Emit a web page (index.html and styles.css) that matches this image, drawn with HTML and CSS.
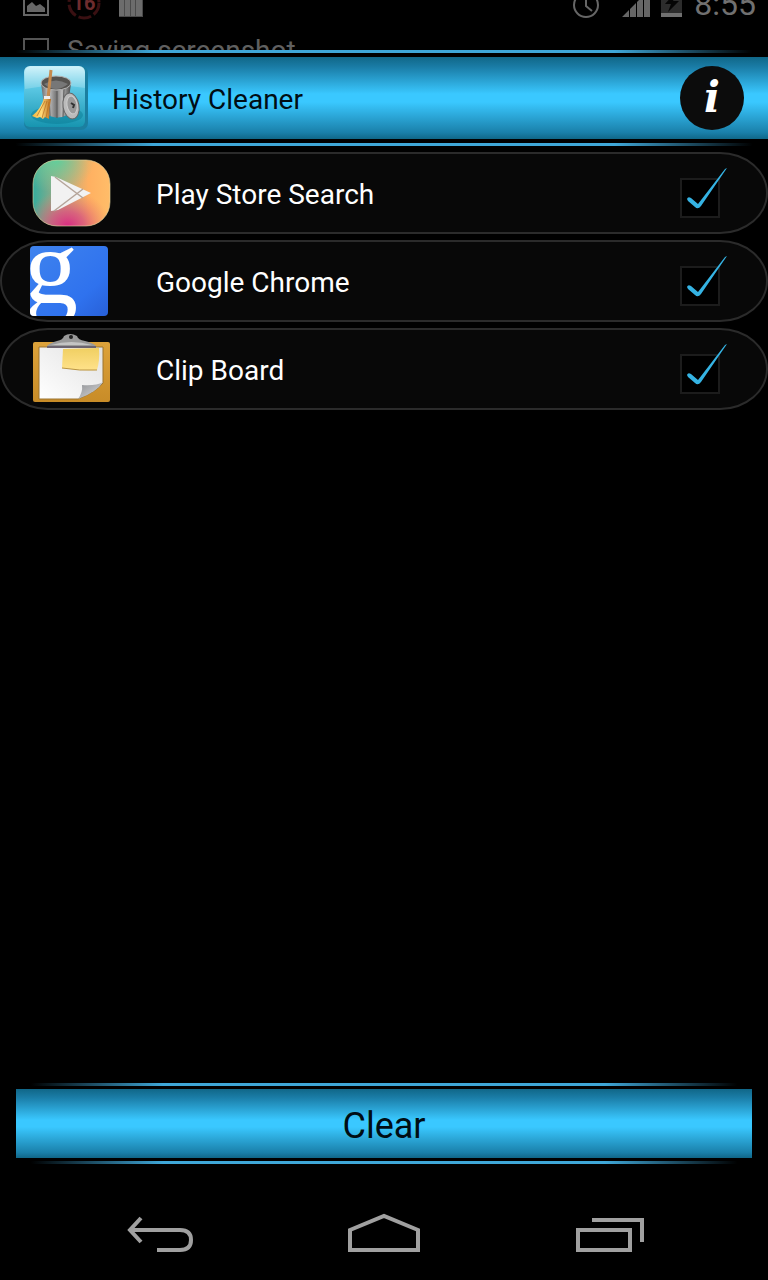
FILE: index.html
```
<!DOCTYPE html>
<html lang="en">
  <head>
    <meta charset="UTF-8" />
    <meta name="viewport" content="width=device-width, initial-scale=1.0" />
    <title>History Cleaner</title>
    <link rel="stylesheet" href="styles.css">
  </head>
  <body>
    <div class="status">
      <div class="status-row status-scrolled">
        <svg width="26" height="26" viewBox="0 0 26 26">
          <rect x="1" y="1" width="24" height="23" fill="none" stroke="#666" stroke-width="2" />
          <path d="M4 21v-6l5-4 4 4 4-2 5 4v4z" fill="#666" />
        </svg>
        <svg width="34" height="34" viewBox="0 0 34 34">
          <circle cx="17" cy="16" r="15" fill="none" stroke="#3a1012" stroke-width="3" stroke-dasharray="13 3" />
          <text class="badge-text" x="17" y="23" text-anchor="middle">16</text>
        </svg>
        <svg width="24" height="26" viewBox="0 0 24 26">
          <path d="M0 0h24v26H0z" fill="#4a4a4a" />
          <path d="M0 0h5v25H0zM6 0h5v25H6zM12 0h4v25h-4zM17 0h6v25h-6z" fill="#6c6c6c" />
        </svg>
        <div class="status-right">
          <svg class="alarm" width="28" height="28" viewBox="0 0 28 28">
            <circle cx="14" cy="15" r="12" fill="none" stroke="#666" stroke-width="2" />
            <path d="M14 7v9l6 5" fill="none" stroke="#666" stroke-width="2" />
          </svg>
          <svg width="28" height="28" viewBox="0 0 28 28">
            <path d="M0 27L7 20v7zM8 19l6-6v14H8zM15 12l6-6v21h-6zM22 5l6-5v27h-6z" fill="#666" />
          </svg>
          <svg width="22" height="28" viewBox="0 0 22 28">
            <path d="M0 0h21v27H0z" fill="#2c2c2c" />
            <path d="M0 23h21v4H0z" fill="#707070" />
            <path d="M13 4L4 14h6l-3 8 11-11h-6l4-7z" fill="#050505" />
          </svg>
          <span class="clock">8:55</span>
        </div>
      </div>
      <div class="status-row">
        <svg width="26" height="26" viewBox="0 0 26 26">
          <rect x="1" y="2" width="24" height="23" fill="none" stroke="#555" stroke-width="2" />
        </svg>
        <span>Saving screenshot</span>
      </div>
    </div>

    <header class="glow">
      <div class="glow-fill title-bar">
        <svg width="64" height="64" viewBox="0 0 64 64">
          <defs>
            <linearGradient id="tile" x1="0" y1="0" x2="0" y2="1">
              <stop offset="0" stop-color="#c8f1fa" />
              <stop offset=".35" stop-color="#5cc8e4" />
              <stop offset="1" stop-color="#1795b0" />
            </linearGradient>
            <linearGradient id="can">
              <stop offset="0" stop-color="#666" />
              <stop offset=".25" stop-color="#c4c4c4" />
              <stop offset=".5" stop-color="#777" />
              <stop offset=".7" stop-color="#bbb" />
              <stop offset="1" stop-color="#4a4a4a" />
            </linearGradient>
            <linearGradient id="straw">
              <stop offset="0" stop-color="#f2b63c" />
              <stop offset=".5" stop-color="#ffd978" />
              <stop offset="1" stop-color="#b96a1b" />
            </linearGradient>
          </defs>
          <rect width="64" height="64" rx="7" fill="#1b7fa0" />
          <rect width="61" height="61" rx="6" fill="url(#tile)" />
          <path d="M1 23Q32 17 61 22V7q0-6-6-6H7Q1 1 1 7z" fill="#fff" opacity=".2" />
          <ellipse cx="33" cy="49" rx="26" ry="9" fill="#087b92" opacity=".45" />
          <path d="M17 17l4 30q11 8 22 2l4-32z" fill="url(#can)" />
          <path d="M25 24l1 26M33 25v27M40 23l-1 28" stroke="#555" stroke-width="1" />
          <ellipse cx="32" cy="17" rx="15" ry="7" fill="#555350" stroke="#b5b5b5" stroke-width="1" />
          <path d="M20 18q12-7 24 0-6 5-12 5t-12-5z" fill="#777" />
          <ellipse cx="47" cy="40" rx="8" ry="13" fill="#bbb" stroke="#666" stroke-width="1" transform="rotate(-10 47 40)" />
          <ellipse cx="48" cy="39" rx="5" ry="9" fill="#999" stroke="#ccc" stroke-width="1" transform="rotate(-10 48 39)" />
          <path d="M47 37l3 2-1 3" fill="none" stroke="#333" stroke-width="2" />
          <path d="M27 4l-3 28" stroke="#c58a4e" stroke-width="3" />
          <path d="M20 32l7 1q-2 9-2 20l-4-2-2 2-3-2-3 1-5-2q9-7 12-18z" fill="url(#straw)" />
          <path d="M21 35l-8 15M23 35l-5 17M25 36l-3 16" stroke="#b86d1e" stroke-width="1" opacity=".7" />
          <path d="M20 30h6v3h-6z" fill="#eee" />
        </svg>
        <h1>History Cleaner</h1>
        <button class="info" type="button" aria-label="About">i</button>
      </div>
    </header>

    <main>
      <label class="item">
        <svg width="84" height="78" viewBox="0 0 84 78">
          <defs>
            <linearGradient id="play">
              <stop offset="0" stop-color="#35ad9d" />
              <stop offset=".4" stop-color="#b5ab80" />
              <stop offset=".72" stop-color="#ffb061" />
              <stop offset="1" stop-color="#ffbd69" />
            </linearGradient>
            <radialGradient id="pink" cx=".45" cy="1" r=".55">
              <stop offset="0" stop-color="#d82b83" />
              <stop offset=".4" stop-color="#d9527f" stop-opacity=".8" />
              <stop offset="1" stop-color="#ea8067" stop-opacity="0" />
            </radialGradient>
            <radialGradient id="green" cx=".3" cy="0" r=".5">
              <stop offset="0" stop-color="#60cf9b" />
              <stop offset="1" stop-color="#8bc692" stop-opacity="0" />
            </radialGradient>
          </defs>
          <rect x="5" y="6" width="77" height="66" rx="24" fill="url(#play)" />
          <rect x="5" y="6" width="77" height="66" rx="24" fill="url(#green)" />
          <rect x="5" y="6" width="77" height="66" rx="24" fill="url(#pink)" stroke="#e6d7a0" stroke-opacity=".6" />
          <path d="M23 22l5 1 35 16-33 17-7 1z" fill="#f2f2f2" />
          <path d="M27 23l28 21M26 57l29-22" stroke="#b5a59a" stroke-width="1.5" />
        </svg>
        <span class="item-name">Play Store Search</span>
        <span class="check">
          <input type="checkbox" checked>
          <svg width="48" height="50" viewBox="0 0 48 50">
            <path d="M7 31q1-3 4-1l7 6L45 1l2-1-26 38q-3 4-6 1l-7-6z" />
          </svg>
        </span>
      </label>

      <label class="item">
        <svg width="84" height="78" viewBox="0 0 84 78">
          <defs>
            <linearGradient id="blue" x1="0" y1="0" x2="1" y2="1">
              <stop offset="0" stop-color="#3f83ee" />
              <stop offset=".7" stop-color="#2f72ee" />
              <stop offset="1" stop-color="#2860d8" />
            </linearGradient>
            <clipPath id="square">
              <rect x="2" y="4" width="78" height="70" rx="4" />
            </clipPath>
          </defs>
          <rect x="2" y="4" width="78" height="70" rx="4" fill="url(#blue)" />
          <text class="logo-g" x="-4" y="61" clip-path="url(#square)">g</text>
        </svg>
        <span class="item-name">Google Chrome</span>
        <span class="check">
          <input type="checkbox" checked>
          <svg width="48" height="50" viewBox="0 0 48 50">
            <path d="M7 31q1-3 4-1l7 6L45 1l2-1-26 38q-3 4-6 1l-7-6z" />
          </svg>
        </span>
      </label>

      <label class="item">
        <svg width="84" height="78" viewBox="0 0 84 78">
          <defs>
            <linearGradient id="board" x1="0" y1="0" x2="0" y2="1">
              <stop offset="0" stop-color="#dda23a" />
              <stop offset="1" stop-color="#c88c28" />
            </linearGradient>
            <linearGradient id="paper" x1="1" y1="0" x2="0" y2="1">
              <stop offset="0" stop-color="#e2e2e2" />
              <stop offset="1" stop-color="#fff" />
            </linearGradient>
            <linearGradient id="note" x1="0" y1="0" x2="0" y2="1">
              <stop offset="0" stop-color="#f0cf62" />
              <stop offset="1" stop-color="#ffe28a" />
            </linearGradient>
            <linearGradient id="curl" x1="0" y1="0" x2="1" y2="1">
              <stop offset="0" stop-color="#8e9094" />
              <stop offset="1" stop-color="#dcdcdc" />
            </linearGradient>
          </defs>
          <rect x="5" y="12" width="77" height="60" rx="2" fill="url(#board)" />
          <path d="M11 17h64v36q-7 9-25 16H11z" fill="url(#paper)" stroke="#9b7430" stroke-width="1" />
          <path d="M50 69q5-7 4-14 14 1 21-3-6 10-25 17z" fill="url(#curl)" />
          <path d="M35 19l36-1q1 12-2 22-17 1-35-2z" fill="url(#note)" />
          <path d="M34 38q18 3 35 2" fill="none" stroke="#b99443" stroke-width="1" />
          <path d="M19 16q3-3 10-5 6-1 7-5 6-4 13 0 1 4 8 5 8 2 11 5v2H19z" fill="#999" />
          <path d="M23 15q20-6 41 0z" fill="#c4c4c4" />
          <circle cx="43" cy="7" r="2" fill="#222" />
          <path d="M19 17h49" stroke="#6c6470" stroke-width="2" />
        </svg>
        <span class="item-name">Clip Board</span>
        <span class="check">
          <input type="checkbox" checked>
          <svg width="48" height="50" viewBox="0 0 48 50">
            <path d="M7 31q1-3 4-1l7 6L45 1l2-1-26 38q-3 4-6 1l-7-6z" />
          </svg>
        </span>
      </label>
    </main>

    <div class="actions glow">
      <button class="glow-fill clear" type="button">Clear</button>
    </div>

    <nav>
      <button type="button" aria-label="Back">
        <svg width="72" height="40" viewBox="0 0 72 40">
          <path d="M17 6L6 18l11 12M6 18h50q11 0 11 10T56 38H33" />
        </svg>
      </button>
      <button type="button" aria-label="Home">
        <svg width="72" height="40" viewBox="0 0 72 40">
          <path d="M2 38V18L36 4l34 14v20z" />
        </svg>
      </button>
      <button type="button" aria-label="Recent apps">
        <svg width="72" height="40" viewBox="0 0 72 40">
          <path d="M6 18h52v20H6zM20 8h50v22" />
        </svg>
      </button>
    </nav>
  </body>
</html>
```
FILE: styles.css
```
/* Basic Reset */
* {
  margin: 0;
  padding: 0;
  box-sizing: border-box;
}

body {
  display: flex;
  flex-direction: column;
  min-height: 100vh;
  background-color: #000;
  color: #fff;
  font-family: Roboto, "Noto Sans", sans-serif;
  font-size: 28px;
}

svg {
  display: block;
  flex-shrink: 0;
}

button {
  border: none;
  background: none;
  font-family: inherit;
  cursor: pointer;
}

/* Status bar, scrolling up to the ticker */
.status {
  height: 50px;
  overflow: hidden;
}

.status-row {
  display: flex;
  align-items: center;
  gap: 18px;
  height: 46px;
  padding: 0 12px 0 23px;
  color: #606060;
}

.status-scrolled {
  margin-top: -19px;
}

.status-right {
  display: flex;
  align-items: center;
  gap: 11px;
  margin-left: auto;
}

.alarm {
  margin-right: 11px;
}

.clock {
  color: #707070;
  font-size: 32px;
}

.badge-text {
  fill: #6e2c2e;
  font-size: 20px;
  font-weight: bold;
}

/* Blue bars with a thin line above and below */
.glow {
  display: flex;
  flex-direction: column;
  gap: 4px;
}

.glow::before,
.glow::after {
  content: "";
  height: 3px;
  background: linear-gradient(to right, transparent 2%, #3fa7d8 20%, #3fa7d8 80%, transparent 98%);
}

.glow-fill {
  background: linear-gradient(#106788, #1a7ca6 12%, #3ac8ff 45%, #3ac8ff 55%, #1a80aa 92%, #106788);
  color: #000d14;
}

.title-bar {
  display: flex;
  align-items: center;
  gap: 24px;
  height: 82px;
  padding: 0 24px;
}

h1 {
  flex: 1;
  padding-top: 2px;
  font-size: 28px;
  font-weight: normal;
}

.info {
  width: 64px;
  height: 64px;
  border-radius: 50%;
  background-color: #0c0c0c;
  color: #fff;
  font-family: "DejaVu Serif", serif;
  font-size: 42px;
  font-style: italic;
  font-weight: bold;
  line-height: 64px;
}

/* List of things to clean */
main {
  display: flex;
  flex: 1;
  flex-direction: column;
  gap: 6px;
  padding-top: 6px;
}

.item {
  display: flex;
  align-items: center;
  height: 82px;
  padding: 0 38px 0 26px;
  border: 2px solid #2b2b2b;
  border-radius: 48px / 41px;
  background-color: #080808;
}

.item-name {
  flex: 1;
  margin-left: 44px;
  padding-top: 2px;
}

.logo-g {
  fill: #fff;
  font-family: "Liberation Serif", serif;
  font-size: 108px;
}

.check {
  position: relative;
  width: 48px;
  height: 50px;
  padding-top: 10px;
}

.check input {
  display: block;
  width: 40px;
  height: 40px;
  border: 2px solid #1c1c1c;
  background-color: #000;
  appearance: none;
}

.check svg {
  position: absolute;
  top: 0;
  left: 0;
  fill: #35b3e3;
  visibility: hidden;
}

.check input:checked + svg {
  visibility: visible;
}

/* Clear button */
.actions {
  gap: 3px;
  margin: 0 16px 20px;
}

.clear {
  height: 69px;
  padding-top: 4px;
  font-size: 36px;
}

/* Navigation bar */
nav {
  display: flex;
  align-items: center;
  justify-content: center;
  gap: 152px;
  height: 96px;
}

nav path {
  fill: none;
  stroke: #a0a0a0;
  stroke-width: 4;
}
```
